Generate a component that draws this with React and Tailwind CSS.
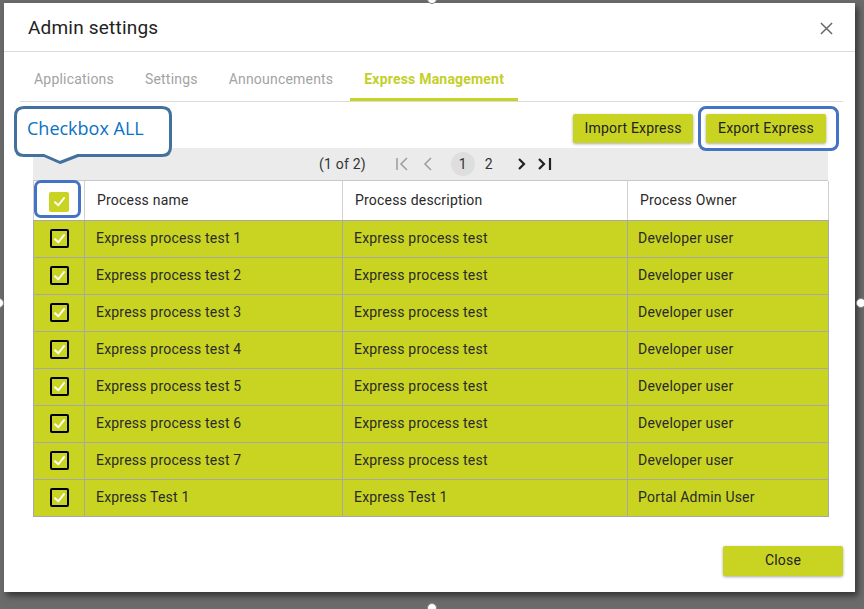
import React from 'react';

const rows = [
  ['Express process test 1', 'Express process test', 'Developer user'],
  ['Express process test 2', 'Express process test', 'Developer user'],
  ['Express process test 3', 'Express process test', 'Developer user'],
  ['Express process test 4', 'Express process test', 'Developer user'],
  ['Express process test 5', 'Express process test', 'Developer user'],
  ['Express process test 6', 'Express process test', 'Developer user'],
  ['Express process test 7', 'Express process test', 'Developer user'],
  ['Express Test 1', 'Express Test 1', 'Portal Admin User'],
];

const tabs = ['Applications', 'Settings', 'Announcements', 'Express Management'];

// check mark used inside the checkboxes
const Check = ({ className }) => (
  <svg viewBox="0 0 20 20" className={className} fill="none">
    <path d="M4 11 L8.5 15 L16 5.5" stroke="white" strokeWidth="2.6" strokeLinecap="round" strokeLinejoin="round" />
  </svg>
);

const RowBox = () => (
  <div className="w-[19px] h-[19px] border-2 border-black rounded-[2px] flex items-center justify-center mx-auto">
    <Check className="w-[15px] h-[15px]" />
  </div>
);

const Handle = ({ className }) => (
  <div className={`absolute w-[10px] h-[10px] rounded-full bg-white border border-[#888] ${className}`} />
);

export default function App() {
  return (
    <div className="relative w-[864px] h-[609px] bg-[#6b6b6b] overflow-hidden pt-[3px] pl-[4px] tracking-[0.2px]" style={{ fontFamily: 'Roboto, "Liberation Sans", sans-serif' }}>
      <div className="relative w-[851px] h-[589px] bg-white shadow-[3px_4px_6px_rgba(0,0,0,0.5)] flex flex-col">
        {/* header */}
        <div className="h-[49px] flex items-center justify-between pl-[24px] pr-[22px] pt-[2px] border-b border-[#dcdcdc] shrink-0">
          <span className="text-[19px] text-[#222]">Admin settings</span>
          <svg viewBox="0 0 14 14" className="w-[13px] h-[13px]">
            <path d="M1 1 L13 13 M13 1 L1 13" stroke="#666" strokeWidth="1.6" />
          </svg>
        </div>

        {/* tabs */}
        <div className="ml-[16px] mr-[12px] h-[50px] border-b border-[#dcdcdc] flex items-stretch gap-[3px] shrink-0">
          {tabs.map((t, i) => (
            <div
              key={t}
              className={`px-[14px] flex items-center text-[14px] ${i === 3 ? 'font-bold text-[#c4d02a] border-b-[3px] border-[#c9d422] pt-[8px]' : 'text-[#a3a3a3] pt-[5px]'}`}
            >
              {t}
            </div>
          ))}
        </div>

        {/* content */}
        <div className="relative pl-[29px] pr-[27px]">
          <div className="h-[46px] flex justify-end items-start pt-[12px] pr-[2px] gap-[13px]">
            <button className="w-[120px] h-[29px] bg-[#c9d422] text-[14px] text-[#222] rounded-[2px] shadow-[0_1px_3px_rgba(0,0,0,0.35)]">Import Express</button>
            <button className="w-[120px] h-[29px] bg-[#c9d422] text-[14px] text-[#222] rounded-[2px] shadow-[0_1px_3px_rgba(0,0,0,0.35)]">Export Express</button>
          </div>

          <div className="w-[795px]">
            {/* pager */}
            <div className="h-[33px] bg-[#ebebeb] border-b border-[#c8c8c8] flex items-center justify-center text-[14px] text-[#333] pl-[12px]">
              <span>(1 of 2)</span>
              <svg viewBox="0 0 16 16" className="w-[16px] h-[16px] ml-[28px]" fill="none">
                <path d="M3 2 V14 M13 2 L7 8 L13 14" stroke="#a0a0a0" strokeWidth="1.6" />
              </svg>
              <svg viewBox="0 0 16 16" className="w-[16px] h-[16px] ml-[10px]" fill="none">
                <path d="M11 2 L5 8 L11 14" stroke="#a0a0a0" strokeWidth="1.6" />
              </svg>
              <span className="ml-[15px] w-[24px] h-[24px] rounded-full bg-[#dedede] flex items-center justify-center">1</span>
              <span className="ml-[9px] w-[10px] text-center">2</span>
              <svg viewBox="0 0 16 16" className="w-[16px] h-[16px] ml-[20px]" fill="none">
                <path d="M5 3 L10 8 L5 13" stroke="#222" strokeWidth="2.2" />
              </svg>
              <svg viewBox="0 0 18 16" className="w-[18px] h-[16px] ml-[6px]" fill="none">
                <path d="M3 3 L8 8 L3 13" stroke="#222" strokeWidth="2.2" />
                <path d="M14 2 V14" stroke="#222" strokeWidth="2.2" />
              </svg>
            </div>

            <table className="w-[795px] border-collapse table-fixed text-[14px] text-[#2a2a2a]">
              <colgroup>
                <col className="w-[51px]" />
                <col className="w-[258px]" />
                <col className="w-[285px]" />
                <col className="w-[201px]" />
              </colgroup>
              <thead>
                <tr className="h-[39px] bg-white">
                  <th className="border-l border-[#d0d0d0] border-b border-b-[#a8a8a8]">
                    <div className="w-[20px] h-[20px] bg-[#c9d422] rounded-[2px] flex items-center justify-center mx-auto mt-[3px]">
                      <Check className="w-[15px] h-[15px]" />
                    </div>
                  </th>
                  <th className="border-l border-[#d0d0d0] border-b border-b-[#a8a8a8] text-left font-normal pl-[12px]">Process name</th>
                  <th className="border-l border-[#d0d0d0] border-b border-b-[#a8a8a8] text-left font-normal pl-[12px]">Process description</th>
                  <th className="border-x border-[#d0d0d0] border-b border-b-[#a8a8a8] text-left font-normal pl-[12px]">Process Owner</th>
                </tr>
              </thead>
              <tbody>
                {rows.map((r, i) => (
                  <tr key={i} className="h-[37px] bg-[#c9d422]">
                    <td className="border border-[#a8a8a8]"><RowBox /></td>
                    <td className="border border-[#a8a8a8] pl-[11px]">{r[0]}</td>
                    <td className="border border-[#a8a8a8] pl-[11px]">{r[1]}</td>
                    <td className="border border-[#a8a8a8] pl-[10px]">{r[2]}</td>
                  </tr>
                ))}
              </tbody>
            </table>
          </div>

          {/* annotation: callout */}
          <div className="absolute left-[10px] top-[4px] w-[158px] h-[59px]">
            <svg viewBox="0 0 158 59" className="absolute inset-0 w-[158px] h-[59px]" fill="none">
              <path
                d="M10 1.5 H148 Q156.5 1.5 156.5 10 V41 Q156.5 49.5 148 49.5 H64 L46 56.5 L30 49.5 H10 Q1.5 49.5 1.5 41 V10 Q1.5 1.5 10 1.5 Z"
                fill="white"
                stroke="#41719c"
                strokeWidth="3"
                strokeLinejoin="round"
              />
            </svg>
            <span className="absolute left-[13px] top-[9px] text-[18px] tracking-normal text-[#0b72c4]" style={{ fontFamily: '"Open Sans", "Noto Sans", sans-serif' }}>Checkbox ALL</span>
          </div>
          {/* annotation: header checkbox outline */}
          <div className="absolute left-[30px] top-[78px] w-[47px] h-[38px] border-[3px] border-[#4472c4] rounded-[7px]" />
          {/* annotation: export outline */}
          <div className="absolute left-[694px] top-[4px] w-[141px] h-[45px] border-[3px] border-[#4472c4] rounded-[8px]" />
        </div>

        {/* footer */}
        <div className="flex justify-end pr-[12px] mt-[29px]">
          <button className="w-[120px] h-[30px] bg-[#c9d422] text-[14px] text-[#222] rounded-[2px] shadow-[0_1px_3px_rgba(0,0,0,0.35)]">Close</button>
        </div>
      </div>

      <Handle className="left-[427px] top-[-6px]" />
      <Handle className="left-[-6px] top-[298px]" />
      <Handle className="left-[856px] top-[298px]" />
      <Handle className="left-[427px] top-[603px]" />
    </div>
  );
}
